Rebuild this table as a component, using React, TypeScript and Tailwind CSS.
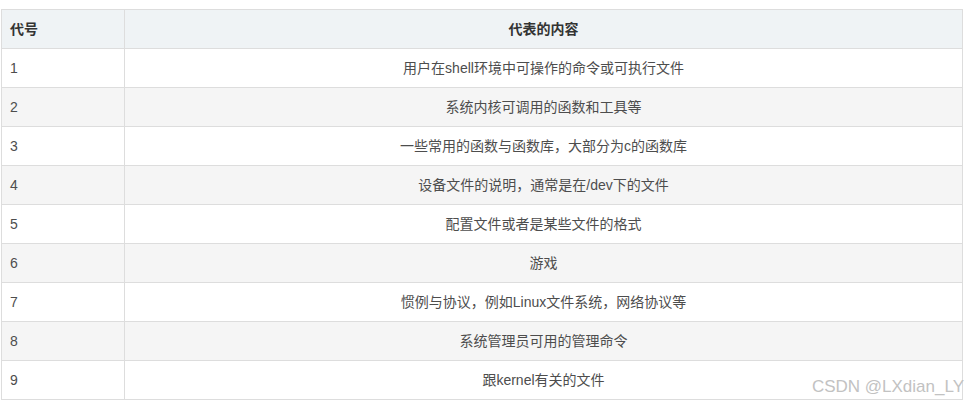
import React from "react";

const rows: [string, string][] = [
  ["1", "用户在shell环境中可操作的命令或可执行文件"],
  ["2", "系统内核可调用的函数和工具等"],
  ["3", "一些常用的函数与函数库，大部分为c的函数库"],
  ["4", "设备文件的说明，通常是在/dev下的文件"],
  ["5", "配置文件或者是某些文件的格式"],
  ["6", "游戏"],
  ["7", "惯例与协议，例如Linux文件系统，网络协议等"],
  ["8", "系统管理员可用的管理命令"],
  ["9", "跟kernel有关的文件"],
];

const App: React.FC = () => {
  return (
    <div
      className="relative h-[404px] w-[967px] overflow-hidden bg-white pl-[1px] pt-[9px] text-[14px] text-[#4d4d4d]"
      style={{ fontFamily: '"Liberation Sans", Arial, "Noto Sans CJK SC", sans-serif' }}
    >
      <table className="w-[962px] table-fixed border-collapse">
        <colgroup>
          <col className="w-[123px]" />
          <col />
        </colgroup>
        <thead>
          <tr className="h-[39px] bg-[#eff3f5]">
            <th className="border border-[#dddddd] px-2 text-left font-bold text-[#333333]">
              代号
            </th>
            <th className="border border-[#dddddd] px-2 text-center font-bold text-[#333333]">
              代表的内容
            </th>
          </tr>
        </thead>
        <tbody>
          {rows.map(([code, desc], i) => (
            <tr
              key={code}
              className={`h-[39px] ${i % 2 === 1 ? "bg-[#f5f5f5]" : "bg-white"}`}
            >
              <td className="border border-[#dddddd] px-2 text-left">{code}</td>
              <td className="border border-[#dddddd] px-2 text-center">{desc}</td>
            </tr>
          ))}
        </tbody>
      </table>
      {/* watermark */}
      <div className="absolute bottom-[9px] right-[3px] text-[17px] leading-none text-[#c2c2c2]">
        CSDN @LXdian_LY
      </div>
    </div>
  );
};

export default App;
